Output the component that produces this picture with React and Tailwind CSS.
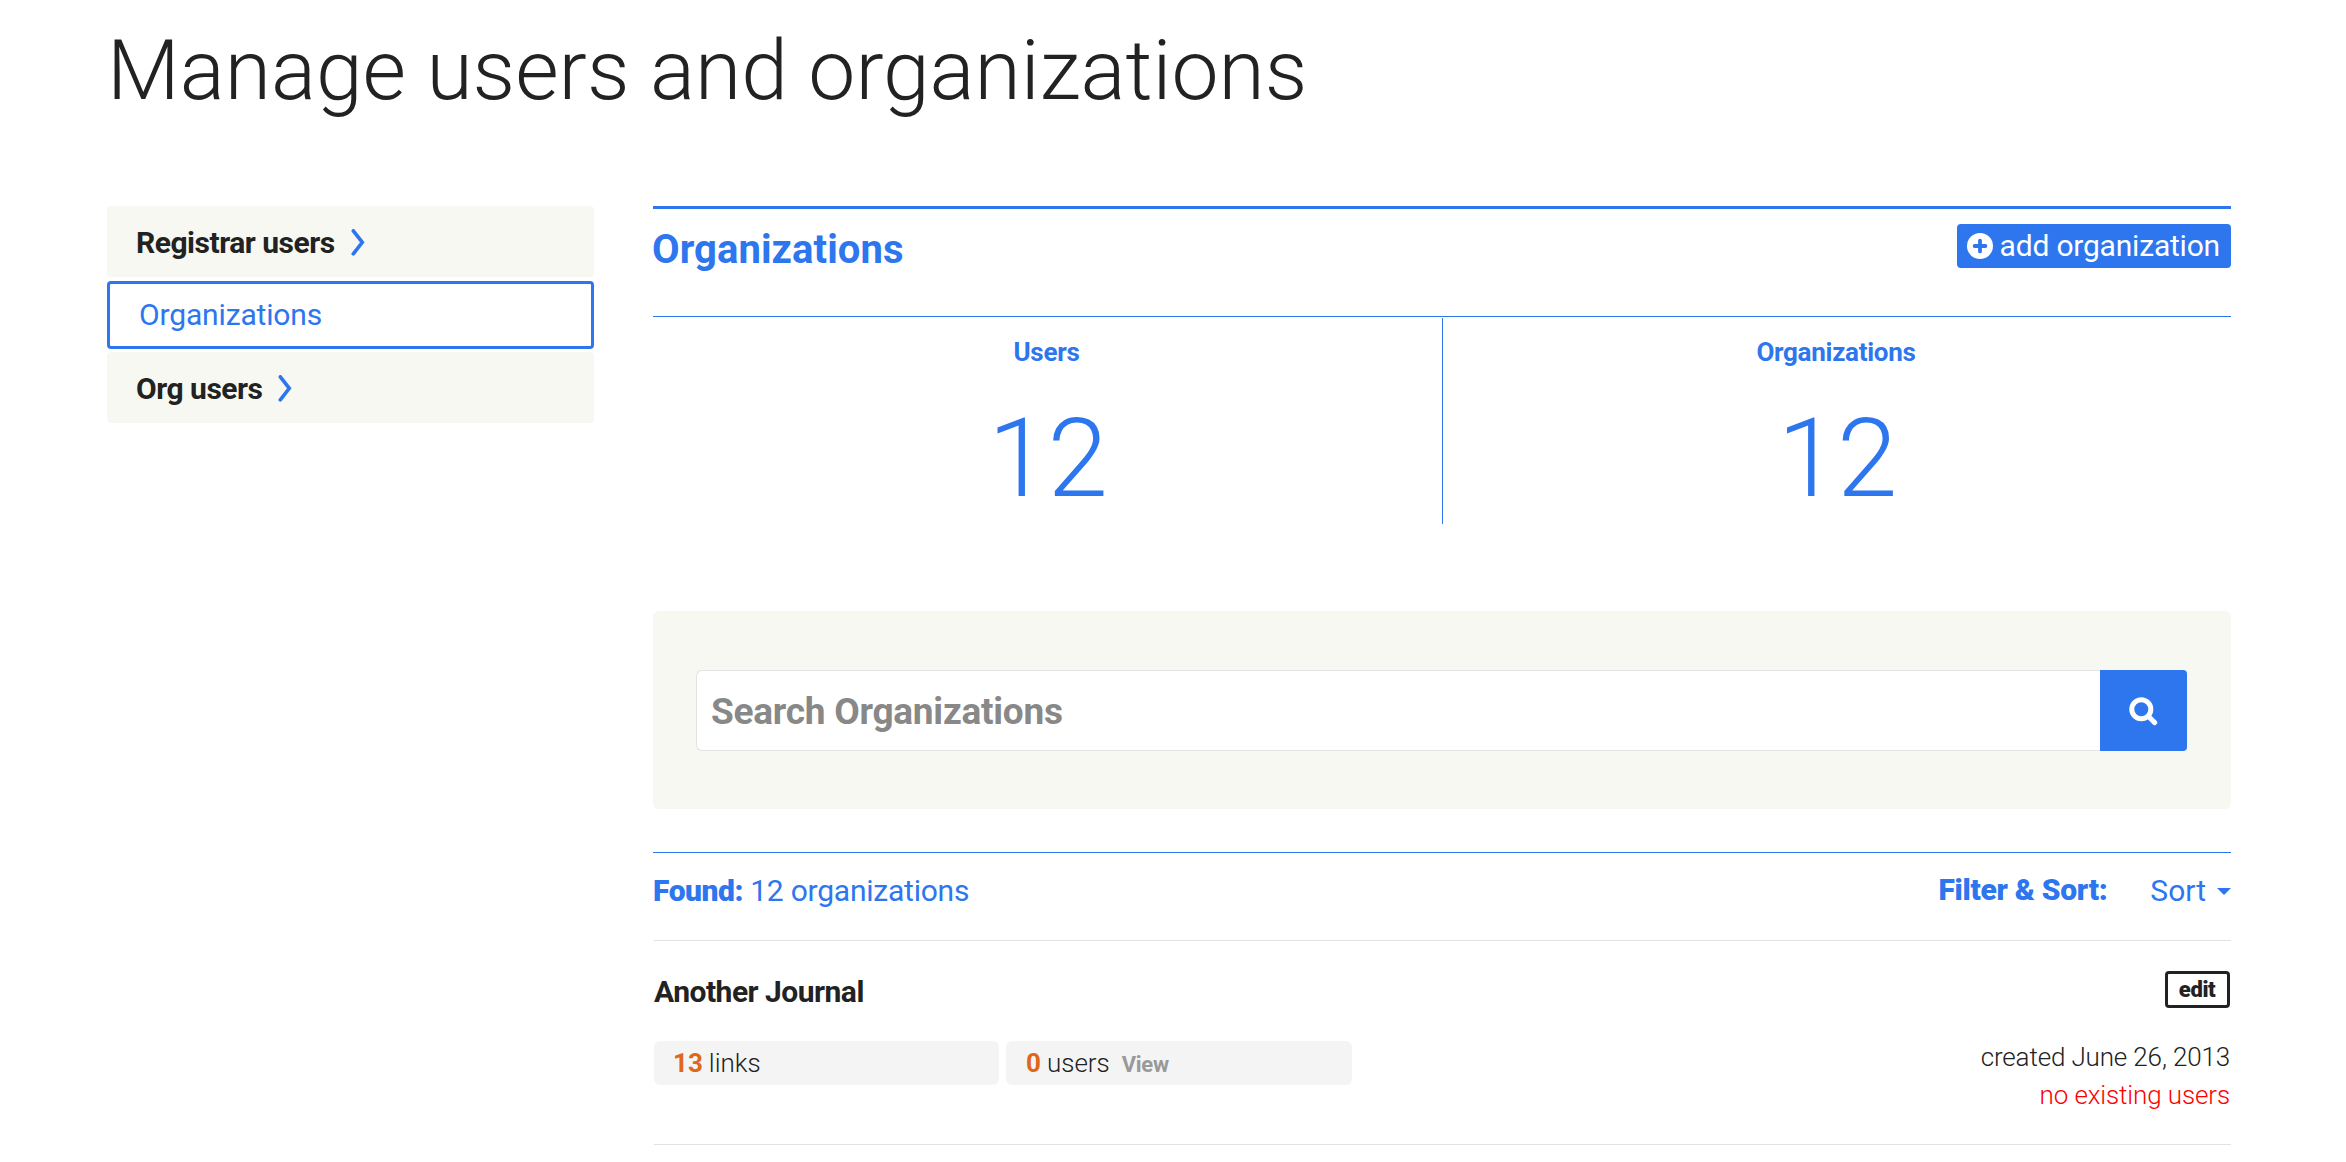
const navItems = [
  { label: 'Registrar users', active: false },
  { label: 'Organizations', active: true },
  { label: 'Org users', active: false },
];

const stats = [
  { label: 'Users', value: 12 },
  { label: 'Organizations', value: 12 },
];

function Chevron() {
  return (
    <svg className="h-[27px] w-[15px]" viewBox="0 0 15 27" fill="none">
      <path d="M2.3 1.8 11.3 13.3 2.3 24.9" stroke="#2d76ee" strokeWidth="3.6" strokeLinecap="round" strokeLinejoin="miter" />
    </svg>
  );
}

function PlusCircle() {
  return (
    <svg className="size-[26px]" viewBox="0 0 26 26">
      <circle cx="13" cy="13" r="13" fill="#fff" />
      <path d="M13 7.6v10.8M7.6 13h10.8" stroke="#2d76ee" strokeWidth="3.8" strokeLinecap="round" />
    </svg>
  );
}

function SearchIcon() {
  return (
    <svg className="size-[29px]" viewBox="0 0 29 29" fill="none" stroke="#fff" strokeLinecap="round">
      <circle cx="12.3" cy="12.2" r="9.5" strokeWidth="5" />
      <path d="M19.8 19.8 25.7 25.6" strokeWidth="5" />
    </svg>
  );
}

function Sidebar() {
  return (
    <nav className="flex w-[487px] flex-col">
      {navItems.map((item) =>
        item.active ? (
          <a key={item.label} className="mt-1 mb-[3px] flex h-[68px] items-center rounded-[4px] border-[3px] border-[#2d76ee] pl-[29px] text-[30px] leading-9 tracking-[-0.15px] text-[#2d76ee]">
            {item.label}
          </a>
        ) : (
          <a key={item.label} className="flex h-[71px] items-center gap-4 rounded-[4px] bg-[#f7f8f2] pt-[2px] pl-[29px] text-[30px] leading-9 font-bold tracking-[-0.48px]">
            {item.label}
            <Chevron />
          </a>
        )
      )}
    </nav>
  );
}

function Stats() {
  return (
    <section className="mt-px grid h-[206px] grid-cols-[790px_788px] text-center text-[#2d76ee]">
      {stats.map((s, i) => (
        <div key={s.label} className={i === 0 ? 'border-r border-[#2d76ee] pt-[18px]' : 'pt-[18px]'}>
          <h3 className="pr-[2px] text-[26px] leading-8 font-bold tracking-[-0.28px]">{s.label}</h3>
          <p className="mt-9 text-[109px] leading-[110px] font-light tracking-[-1px]">{s.value}</p>
        </div>
      ))}
    </section>
  );
}

function SearchPanel() {
  return (
    <form className="mt-[87px] flex h-[198px] items-center rounded-[6px] bg-[#f7f8f2] pr-11 pl-[43px]">
      <div className="flex h-[81px] flex-1 items-center rounded-l-[6px] border border-r-0 border-[#e3e3e3] bg-white pt-1 pl-[14px] text-[37px] leading-[44px] font-bold tracking-[-0.25px] text-[#888]">
        Search Organizations
      </div>
      <button type="button" className="flex h-[81px] w-[87px] items-center justify-center rounded-r-[4px] bg-[#2d76ee] pt-[3px]">
        <SearchIcon />
      </button>
    </form>
  );
}

function ResultsBar() {
  return (
    <div className="mt-[43px] flex h-[88px] items-start justify-between border-t border-[#2d76ee] pt-5 text-[30px] leading-9 text-[#2d76ee]">
      <p className="tracking-[-0.23px]">
        <span className="font-black tracking-[-0.45px]">Found:</span> 12 organizations
      </p>
      <div className="flex items-start">
        <span className="-mt-px font-black tracking-[-0.3px]">Filter &amp; Sort:</span>
        <a className="ml-[43px]">Sort</a>
        <svg className="mt-[15px] ml-[11px] h-[7px] w-[14px]" viewBox="0 0 14 7">
          <path d="M0 0h14L7 7z" fill="#2d76ee" />
        </svg>
      </div>
    </div>
  );
}

function OrganizationRow() {
  return (
    <article className="ml-px flex h-[205px] justify-between border-y border-[#e2e2e2]">
      <div className="pt-[33px]">
        <h4 className="text-[30px] leading-9 font-bold tracking-[-0.5px]">Another Journal</h4>
        <div className="mt-[31px] flex gap-[7px] text-[26px] leading-8 font-light">
          <div className="flex h-11 w-[345px] items-center rounded-[6px] bg-[#f4f4f4] pl-[19px]">
            <span className="mr-[6px] font-bold text-[#e0661a]">13</span>links
          </div>
          <div className="flex h-11 w-[346px] items-center rounded-[6px] bg-[#f4f4f4] pl-5">
            <span className="mr-[6px] font-bold text-[#e0661a]">0</span>users
            <a className="mt-[3px] ml-3 text-[22px] font-bold tracking-[-0.3px] text-[#999]">View</a>
          </div>
        </div>
      </div>
      <div className="mr-px flex flex-col items-end pt-[30px] text-[26px] leading-[38px] font-light">
        <a className="flex h-[37px] w-[65px] items-center justify-center rounded-[4px] border-[3px] border-[#222] pt-px pr-px text-[22px] leading-none font-black tracking-[-0.4px]">edit</a>
        <p className="mt-[30px] tracking-[-0.15px]">created June 26, 2013</p>
        <p className="tracking-[-0.12px] text-[#ff0000]">no existing users</p>
      </div>
    </article>
  );
}

export default function App() {
  return (
    <div className="h-[1162px] w-[2346px] overflow-hidden bg-white pr-[115px] pl-[107px] font-['Roboto',sans-serif] text-[#222]">
      <h1 className="pt-[23px] text-[84px] leading-[96px] font-light">Manage users and organizations</h1>
      <div className="mt-[87px] flex items-start gap-[59px]">
        <Sidebar />
        <main className="w-[1578px]">
          <header className="flex h-[111px] items-start justify-between border-t-[3px] border-b border-t-[#2d76ee] border-b-[#2d76ee] text-[#2d76ee]">
            <h2 className="-ml-px pt-[17px] text-[40px] leading-[48px] font-bold tracking-[0.08px]">Organizations</h2>
            <button type="button" className="mt-[15px] flex h-11 items-center rounded-[4px] bg-[#2d76ee] pr-[11px] pl-[10px] text-[30px] leading-9 tracking-[-0.2px] text-white">
              <PlusCircle />
              <span className="ml-[7px]">add organization</span>
            </button>
          </header>
          <Stats />
          <SearchPanel />
          <ResultsBar />
          <OrganizationRow />
        </main>
      </div>
    </div>
  );
}
